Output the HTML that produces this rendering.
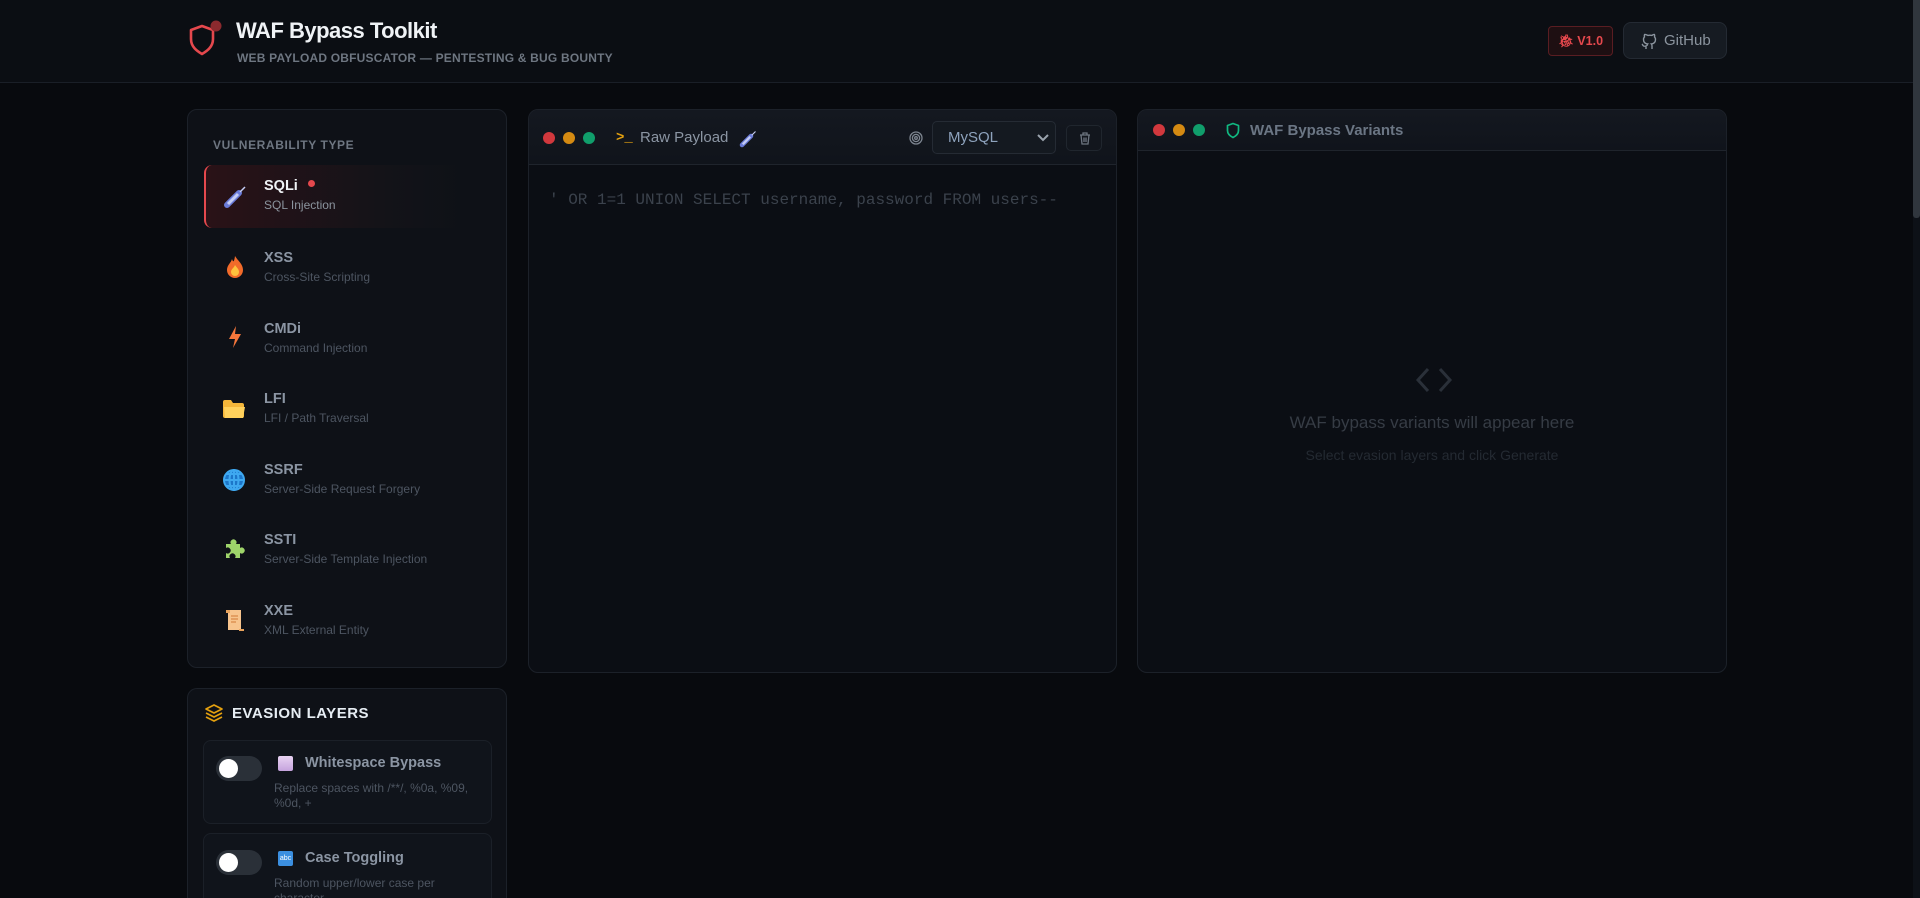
<!DOCTYPE html>
<html><head><meta charset="utf-8"><style>
*{box-sizing:border-box;margin:0;padding:0}
html,body{width:1920px;height:898px;overflow:hidden;background:#080a0e;font-family:"Liberation Sans",sans-serif;color:#c9d1d9}
.a{position:absolute}
.hdr{left:0;top:0;width:1913px;height:83px;background:#0b0e13;border-bottom:1px solid #1a1f27}
.panel{background:#0e1117;border:1px solid #1c2129;border-radius:10px}
.item{left:16px;width:261px;height:63px;border-radius:8px}
.nm{font-size:14.5px;font-weight:bold;color:#8b95a3}
.ds{font-size:12px;color:#4d5561;margin-top:4px}
.dot{width:12px;height:12px;border-radius:50%}
.card{left:15px;width:289px;background:#10141b;border:1px solid #1b2028;border-radius:8px}
.tog{left:12px;width:46px;height:25px;border-radius:13px;background:#2a3038}
.tog::after{content:"";position:absolute;left:3px;top:3px;width:19px;height:19px;border-radius:50%;background:#fff}
</style></head><body>
<div class="a hdr">
  <svg class="a" style="left:188px;top:20px" width="34" height="38" viewBox="0 0 34 38"><path d="M14 6 L25 10 V19 C25 27 19 31 14 34 C9 31 3 27 3 19 V10 Z" fill="none" stroke="#e5484d" stroke-width="2.6" stroke-linejoin="round"/><circle cx="28" cy="6" r="5.5" fill="#8b2a2e"/></svg>
  <div class="a" style="left:236px;top:18px;font-size:22px;font-weight:bold;color:#f0f3f6;letter-spacing:-0.5px">WAF Bypass Toolkit</div>
  <div class="a" style="left:237px;top:51px;font-size:12px;font-weight:bold;color:#6e7681;letter-spacing:0.2px">WEB PAYLOAD OBFUSCATOR — PENTESTING &amp; BUG BOUNTY</div>
  <div class="a" style="left:1548px;top:26px;width:65px;height:30px;border:1px solid #5a1d22;background:#1e0f12;border-radius:4px;color:#e5484d;font-size:12.5px;font-weight:bold;line-height:28px;text-align:center">🐞︎ V1.0</div>
  <div class="a" style="left:1623px;top:22px;width:104px;height:37px;border:1px solid #242a33;background:#161b22;border-radius:8px;color:#8b949e;font-size:15px;line-height:35px;padding-left:40px">GitHub
    <svg class="a" style="left:17px;top:9px" width="16" height="18" viewBox="0 0 16 18" fill="none" stroke="#8b949e" stroke-width="1.4"><path d="M5 17v-3c-3 1-3-1-4-2M11 17v-3c0-1 0-1.5-.6-2 2.3-.3 4.1-1.3 4.1-4.5 0-1-.4-2-1-2.6.2-.7.2-1.6-.1-2.4 0 0-.9-.2-2.5.9a8 8 0 0 0-4 0C4.5 2.3 3.6 2.5 3.6 2.5c-.3.8-.3 1.7-.1 2.4-.6.6-1 1.6-1 2.6 0 3.2 1.8 4.2 4.1 4.5-.5.5-.6 1-.6 2"/></svg>
  </div>
</div>
<div class="a" style="left:1913px;top:0;width:7px;height:898px;background:#0d1117"></div>
<div class="a" style="left:1913px;top:0;width:7px;height:218px;background:#30363d;border-radius:0 0 3px 3px"></div>

<!-- left panel -->
<div class="a panel" style="left:187px;top:109px;width:320px;height:559px">
  <div class="a" style="left:25px;top:28px;font-size:12px;font-weight:bold;color:#6e7681;letter-spacing:0.6px">VULNERABILITY TYPE</div>
  <div class="a item" style="top:55px;background:linear-gradient(90deg,#2a1217,#131318 70%,#0e1117);border-left:2px solid #e5484d"></div>
  <svg class="a" style="left:35px;top:75px" width="24" height="24" viewBox="0 0 24 24"><path d="M4 20 L16 8" stroke="#6a7bd8" stroke-width="6" stroke-linecap="round"/><path d="M5 19 L15 9" stroke="#c4cdf5" stroke-width="3"/><path d="M17 7 L22 2" stroke="#c4cdf5" stroke-width="1.5"/></svg>
  <div class="a" style="left:76px;top:68px"><div class="nm" style="color:#f0f3f6">SQLi <span style="display:inline-block;width:7px;height:7px;border-radius:50%;background:#e5484d;margin-left:6px;vertical-align:3px"></span></div><div class="ds" style="color:#8b949e">SQL Injection</div></div>

  <svg class="a" style="left:36px;top:145px" width="22" height="24" viewBox="0 0 22 24"><path d="M11 1 C14 6 19 9 19 15 A8 8 0 0 1 3 15 C3 10 7 8 8 4 C9 7 10 8 11 1Z" fill="#f26b2a"/><path d="M11 10 C13 13 15 14 15 17 A4 4 0 0 1 7 17 C7 14 10 13 11 10Z" fill="#ffc23d"/></svg>
  <div class="a" style="left:76px;top:140px"><div class="nm">XSS</div><div class="ds">Cross-Site Scripting</div></div>

  <svg class="a" style="left:38px;top:215px" width="18" height="24" viewBox="0 0 18 24"><path d="M10 1 L3 14 H9 L7 23 L15 9 H9 Z" fill="#f5763b"/></svg>
  <div class="a" style="left:76px;top:211px"><div class="nm">CMDi</div><div class="ds">Command Injection</div></div>

  <svg class="a" style="left:34px;top:289px" width="24" height="20" viewBox="0 0 24 20"><path d="M1 3 Q1 1 3 1 H9 L11 4 H20 Q22 4 22 6 V17 Q22 19 20 19 H3 Q1 19 1 17Z" fill="#f4b63a"/><path d="M2 8 H23 L21 19 H3Z" fill="#ffd15c"/></svg>
  <div class="a" style="left:76px;top:281px"><div class="nm">LFI</div><div class="ds">LFI / Path Traversal</div></div>

  <svg class="a" style="left:34px;top:358px" width="24" height="24" viewBox="0 0 24 24" fill="none" stroke="#3ea8f0" stroke-width="2"><circle cx="12" cy="12" r="10" fill="#1c76c9"/><ellipse cx="12" cy="12" rx="4.5" ry="10"/><path d="M2 12H22M4 6H20M4 18H20M12 2V22"/></svg>
  <div class="a" style="left:76px;top:352px"><div class="nm">SSRF</div><div class="ds">Server-Side Request Forgery</div></div>

  <svg class="a" style="left:35px;top:428px" width="23" height="23" viewBox="0 0 23 23"><path d="M3 6 H8 A3 3 0 1 1 13 6 H17 V10 A3 3 0 1 1 17 15 V20 H12 A3 3 0 1 0 7 20 H3 V15 A3 3 0 1 0 3 10Z" fill="#9ed46a"/></svg>
  <div class="a" style="left:76px;top:422px"><div class="nm">SSTI</div><div class="ds">Server-Side Template Injection</div></div>

  <svg class="a" style="left:36px;top:498px" width="22" height="24" viewBox="0 0 22 24"><rect x="4" y="2" width="13" height="20" fill="#f7c48d"/><path d="M2 2 H6 V5 H2Z M15 21 H20 V23 H15Z" fill="#e8a35c"/><path d="M7 8H14M7 11H14M7 14H12" stroke="#d9894a" stroke-width="1.2"/></svg>
  <div class="a" style="left:76px;top:493px"><div class="nm">XXE</div><div class="ds">XML External Entity</div></div>
</div>

<!-- middle panel -->
<div class="a panel" style="left:528px;top:109px;width:589px;height:564px;background:#0b0e14;overflow:hidden">
  <div class="a" style="left:0;top:0;width:100%;height:55px;background:linear-gradient(#141820,#10141b);border-bottom:1px solid #1f242c"></div>
  <div class="a dot" style="left:14px;top:22px;background:#d1383d"></div>
  <div class="a dot" style="left:34px;top:22px;background:#d48a12"></div>
  <div class="a dot" style="left:54px;top:22px;background:#109e6b"></div>
  <div class="a" style="left:87px;top:20px;font-family:'Liberation Mono',monospace;font-size:14px;color:#e3a00f;font-weight:bold">&gt;_</div>
  <div class="a" style="left:111px;top:19px;font-size:15px;color:#8b95a3">Raw Payload</div>
  <svg class="a" style="left:210px;top:20px" width="18" height="18" viewBox="0 0 24 24"><path d="M4 20 L16 8" stroke="#6a7bd8" stroke-width="6" stroke-linecap="round"/><path d="M5 19 L15 9" stroke="#c4cdf5" stroke-width="3"/><path d="M17 7 L22 2" stroke="#c4cdf5" stroke-width="1.5"/></svg>
  <svg class="a" style="left:380px;top:21px" width="14" height="14" viewBox="0 0 14 14" fill="none" stroke="#7d8590" stroke-width="1.3"><circle cx="7" cy="7" r="6"/><circle cx="7" cy="7" r="3.6"/><circle cx="7" cy="7" r="1.3"/></svg>
  <div class="a" style="left:403px;top:11px;width:124px;height:33px;border:1px solid #252b34;border-radius:5px;background:#141920;font-size:15px;color:#8ea3bd;line-height:31px;padding-left:15px">MySQL
    <svg class="a" style="left:104px;top:12px" width="12" height="8" viewBox="0 0 12 8"><path d="M1 1 L6 6 L11 1" fill="none" stroke="#9aa3ad" stroke-width="2"/></svg></div>
  <div class="a" style="left:537px;top:15px;width:36px;height:26px;border:1px solid #20262e;border-radius:5px;background:#12161d">
    <svg class="a" style="left:12px;top:6px" width="12" height="13" viewBox="0 0 12 13" fill="none" stroke="#6e7681" stroke-width="1.3"><path d="M1 3H11M4 3V1H8V3M2 3L3 12H9L10 3M5 5.5V10M7 5.5V10"/></svg></div>
  <div class="a" style="left:20px;top:81px;font-family:'Liberation Mono',monospace;font-size:16px;color:#3b424c;white-space:pre">' OR 1=1 UNION SELECT username, password FROM users--</div>
</div>

<!-- right panel -->
<div class="a panel" style="left:1137px;top:109px;width:590px;height:564px;background:#0b0e14;overflow:hidden">
  <div class="a" style="left:0;top:0;width:100%;height:41px;background:linear-gradient(#141820,#10141b);border-bottom:1px solid #1f242c"></div>
  <div class="a dot" style="left:15px;top:14px;background:#d1383d"></div>
  <div class="a dot" style="left:35px;top:14px;background:#d48a12"></div>
  <div class="a dot" style="left:55px;top:14px;background:#109e6b"></div>
  <svg class="a" style="left:88px;top:12px" width="14" height="17" viewBox="0 0 14 17"><path d="M7 1.5 L12.5 3.5 V8.5 C12.5 12 10 14 7 15.5 C4 14 1.5 12 1.5 8.5 V3.5Z" fill="none" stroke="#10b981" stroke-width="1.7" stroke-linejoin="round"/></svg>
  <div class="a" style="left:112px;top:12px;font-size:15px;font-weight:bold;color:#6b7684">WAF Bypass Variants</div>
  <svg class="a" style="left:277px;top:257px" width="38" height="26" viewBox="0 0 38 26" fill="none" stroke="#2a3039" stroke-width="3"><path d="M13 2 L3 13 L13 24M25 2 L35 13 L25 24"/></svg>
  <div class="a" style="left:0;top:303px;width:100%;text-align:center;font-size:17px;color:#363c45">WAF bypass variants will appear here</div>
  <div class="a" style="left:0;top:337px;width:100%;text-align:center;font-size:14px;color:#242a32">Select evasion layers and click Generate</div>
</div>

<!-- evasion panel -->
<div class="a panel" style="left:187px;top:688px;width:320px;height:210px;border-bottom:none;border-radius:10px 10px 0 0;overflow:hidden">
  <svg class="a" style="left:16px;top:14px" width="20" height="20" viewBox="0 0 20 20" fill="none" stroke="#e3a00f" stroke-width="1.7" stroke-linejoin="round"><path d="M10 2 L18 6 L10 10 L2 6Z M2 10 L10 14 L18 10 M2 14 L10 18 L18 14"/></svg>
  <div class="a" style="left:44px;top:16px;font-size:15px;font-weight:bold;color:#e6edf3;letter-spacing:0.5px">EVASION LAYERS</div>
  <div class="a card" style="top:51px;height:84px">
    <div class="a tog" style="top:15px"></div>
    <div class="a" style="left:74px;top:15px;width:15px;height:15px;background:linear-gradient(#e8d3f3,#c5a3dd);border-radius:2px"></div>
    <div class="a" style="left:101px;top:14px;font-size:14.5px;font-weight:bold;color:#8b95a3">Whitespace Bypass</div>
    <div class="a" style="left:70px;top:40px;width:210px;font-size:12px;line-height:15px;color:#4d5561">Replace spaces with /**/, %0a, %09, %0d, +</div>
  </div>
  <div class="a card" style="top:144px;height:100px">
    <div class="a tog" style="top:16px"></div>
    <div class="a" style="left:74px;top:17px;width:15px;height:15px;background:#3b8fe0;border-radius:2px;color:#fff;font-size:7px;line-height:15px;text-align:center">abc</div>
    <div class="a" style="left:101px;top:16px;font-size:14.5px;font-weight:bold;color:#8b95a3">Case Toggling</div>
    <div class="a" style="left:70px;top:42px;width:210px;font-size:12px;line-height:15px;color:#4d5561">Random upper/lower case per character</div>
  </div>
</div>
</body></html>
